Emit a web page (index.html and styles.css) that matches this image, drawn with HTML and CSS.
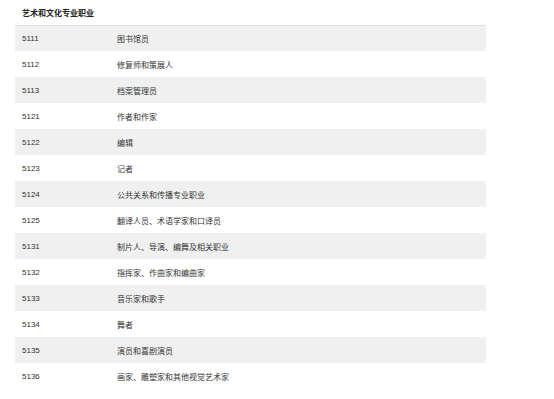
FILE: index.html
```html
<!DOCTYPE html>
<html lang="zh">
<head>
<meta charset="utf-8">
<link rel="stylesheet" href="styles.css">
</head>
<body>
<table class="occ">
  <colgroup>
    <col class="col-code">
    <col class="col-name">
  </colgroup>
  <thead>
    <tr><th colspan="2" class="title">艺术和文化专业职业</th></tr>
  </thead>
  <tbody>
    <tr><td>5111</td><td>图书馆员</td></tr>
    <tr><td>5112</td><td>修复师和策展人</td></tr>
    <tr><td>5113</td><td>档案管理员</td></tr>
    <tr><td>5121</td><td>作者和作家</td></tr>
    <tr><td>5122</td><td>编辑</td></tr>
    <tr><td>5123</td><td>记者</td></tr>
    <tr><td>5124</td><td>公共关系和传播专业职业</td></tr>
    <tr><td>5125</td><td>翻译人员、术语学家和口译员</td></tr>
    <tr><td>5131</td><td>制片人、导演、编舞及相关职业</td></tr>
    <tr><td>5132</td><td>指挥家、作曲家和编曲家</td></tr>
    <tr><td>5133</td><td>音乐家和歌手</td></tr>
    <tr><td>5134</td><td>舞者</td></tr>
    <tr><td>5135</td><td>演员和喜剧演员</td></tr>
    <tr><td>5136</td><td>画家、雕塑家和其他视觉艺术家</td></tr>
  </tbody>
</table>
</body>
</html>
```
FILE: styles.css
```css
html, body {
  margin: 0;
  padding: 0;
  background: #ffffff;
}
body {
  font-family: "Liberation Sans", "Noto Sans CJK SC", sans-serif;
  font-size: 8px;
  color: #333333;
}
.occ {
  margin-left: 15px;
  width: 471px;
  border-collapse: collapse;
  table-layout: fixed;
}
.col-code {
  width: 95px;
}
.occ th.title {
  text-align: left;
  font-weight: bold;
  color: #222222;
  height: 25px;
  padding: 0 7px;
  box-sizing: border-box;
  border-bottom: 1px solid #e2e2e2;
  vertical-align: middle;
}
.occ td {
  height: 26px;
  padding: 0 7px;
  box-sizing: border-box;
  vertical-align: middle;
  white-space: nowrap;
}
.occ tbody tr:nth-child(odd) {
  background: #f0f0f0;
}
```
